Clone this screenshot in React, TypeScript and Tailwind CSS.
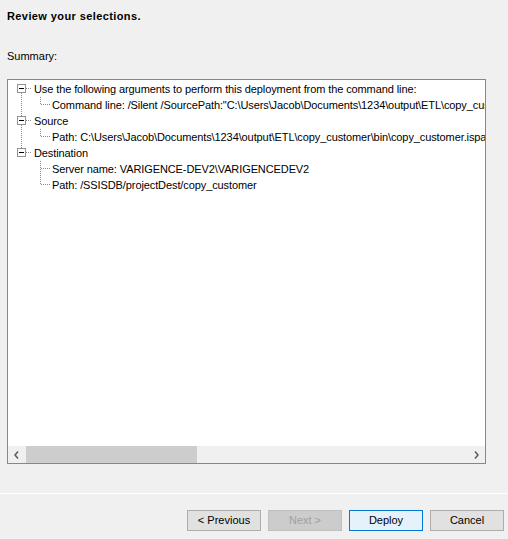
import React from 'react';

type Row = {
  text: string;
  level: 0 | 1;
  // root column: line above box / below box (level 0), or pass-through (level 1)
  up?: boolean;
  down?: boolean;
  pass?: boolean;
  lastChild?: boolean;
};

const rows: Row[] = [
  { text: 'Use the following arguments to perform this deployment from the command line:', level: 0, down: true },
  {
    text: 'Command line: /Silent /SourcePath:"C:\\Users\\Jacob\\Documents\\1234\\output\\ETL\\copy_customer\\bin\\copy_customer.ispac"',
    level: 1,
    pass: true,
    lastChild: true,
  },
  { text: 'Source', level: 0, up: true, down: true },
  {
    text: 'Path: C:\\Users\\Jacob\\Documents\\1234\\output\\ETL\\copy_customer\\bin\\copy_customer.ispac',
    level: 1,
    pass: true,
    lastChild: true,
  },
  { text: 'Destination', level: 0, up: true },
  { text: 'Server name: VARIGENCE-DEV2\\VARIGENCEDEV2', level: 1 },
  { text: 'Path: /SSISDB/projectDest/copy_customer', level: 1, lastChild: true },
];

const dot = { stroke: '#8a8a8a', strokeWidth: 1, strokeDasharray: '1 1', shapeRendering: 'crispEdges' as const };

function Gutter({ row }: { row: Row }) {
  if (row.level === 0) {
    return (
      <svg width="25" height="16" className="shrink-0">
        {row.up && <line x1="13.5" y1="0" x2="13.5" y2="3" style={dot} />}
        {row.down && <line x1="13.5" y1="12" x2="13.5" y2="16" style={dot} />}
        <rect x="9.5" y="3.5" width="8" height="8" fill="#fff" stroke="#919191" shapeRendering="crispEdges" />
        <line x1="11" y1="7.5" x2="16" y2="7.5" stroke="#000" shapeRendering="crispEdges" />
        <line x1="18" y1="7.5" x2="24" y2="7.5" style={dot} />
      </svg>
    );
  }
  return (
    <svg width="44" height="16" className="shrink-0">
      {row.pass && <line x1="13.5" y1="0" x2="13.5" y2="16" style={dot} />}
      <line x1="32.5" y1="0" x2="32.5" y2={row.lastChild ? 8 : 16} style={dot} />
      <line x1="33" y1="7.5" x2="43" y2="7.5" style={dot} />
    </svg>
  );
}

function Button({ label, variant }: { label: string; variant?: 'default' | 'disabled' | 'primary' }) {
  const cls =
    variant === 'disabled'
      ? 'bg-[#cccccc] border-[#bfbfbf] text-[#a0a0a0]'
      : variant === 'primary'
        ? 'bg-[#e5f1fb] border-[#0078d7] text-black'
        : 'bg-[#e1e1e1] border-[#adadad] text-black';
  return (
    <button className={`w-[74px] h-[21px] border text-[11px] leading-[19px] ${cls}`}>{label}</button>
  );
}

export default function App() {
  return (
    <div
      className="w-[508px] h-[539px] bg-[#f0f0f0] flex flex-col text-black overflow-hidden"
      style={{ fontFamily: '"Liberation Sans", Arial, sans-serif' }}
    >
      <h1 className="pt-[9px] pl-[7px] text-[11px] font-bold leading-[14px] tracking-[0.4px]">
        Review your selections.
      </h1>
      <p className="mt-[26px] pl-[7px] text-[11px] leading-[14px]">Summary:</p>

      <div className="mt-[16px] ml-[7px] w-[479px] h-[385px] border border-[#828790] bg-white flex flex-col">
        <div className="flex-1 overflow-hidden pt-[1px]">
          {rows.map((row, i) => (
            <div
              key={i}
              className="flex items-center h-[16px] whitespace-nowrap text-[11px] leading-[16px] tracking-[-0.1px]"
            >
              <Gutter row={row} />
              <span className={row.level === 0 ? 'pl-[1px]' : ''}>{row.text}</span>
            </div>
          ))}
        </div>

        <div className="h-[17px] bg-[#f0f0f0] flex items-stretch">
          <div className="w-[17px] flex items-center justify-center">
            <svg width="5" height="8" viewBox="0 0 5 8">
              <path d="M4 0.5 L1 4 L4 7.5" fill="none" stroke="#606060" strokeWidth="1.6" />
            </svg>
          </div>
          <div className="flex-1 flex">
            <div className="ml-[1px] w-[171px] bg-[#cdcdcd]" />
          </div>
          <div className="w-[17px] flex items-center justify-center">
            <svg width="5" height="8" viewBox="0 0 5 8">
              <path d="M1 0.5 L4 4 L1 7.5" fill="none" stroke="#606060" strokeWidth="1.6" />
            </svg>
          </div>
        </div>
      </div>

      <div className="mt-[29px] h-px bg-white" />

      <div className="mt-[16px] flex justify-end gap-[7px] pr-[4px]">
        <Button label="< Previous" />
        <Button label="Next >" variant="disabled" />
        <Button label="Deploy" variant="primary" />
        <Button label="Cancel" />
      </div>
    </div>
  );
}
